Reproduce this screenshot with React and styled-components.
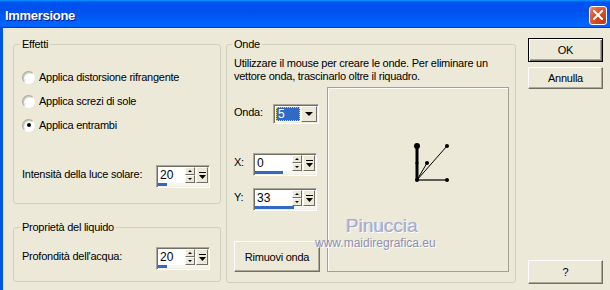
import React from 'react';
import styled, { createGlobalStyle } from 'styled-components';

const GlobalStyle = createGlobalStyle`
  * { box-sizing: border-box; }
  html, body { margin: 0; padding: 0; background: #ece9d8; }
  body {
    font-family: "Liberation Sans", Arial, sans-serif;
    font-size: 11px;
    letter-spacing: -0.25px;
    color: #000;
  }
`;

const Window = styled.div`
  width: 610px;
  height: 290px;
  overflow: hidden;
  display: flex;
  flex-direction: column;
`;

const TitleBar = styled.div`
  flex: none;
  height: 28px;
  display: flex;
  align-items: center;
  justify-content: space-between;
  padding: 2px 3px 0 5px;
  background: linear-gradient(180deg, #0997ff, #0053ee 8%, #0050ee 40%, #0066ff 88%, #0066ff 93%, #005bff 95%, #003dd7 96%, #003dd7);
`;

const Title = styled.span`
  color: #fff;
  font-weight: bold;
  font-size: 13px;
  letter-spacing: -0.3px;
  text-shadow: 1px 1px 0 #0a1883;
`;

const CloseButton = styled.div`
  width: 18px;
  height: 19px;
  border: 1px solid #fff;
  border-radius: 3px;
  display: flex;
  align-items: center;
  justify-content: center;
  background: radial-gradient(circle at 85% 85%, #c63a0c, #d8512a 55%, #e2704f 80%, #ec9a80);
`;

const Body = styled.div`
  flex: 1;
  display: flex;
  border-left: 3px solid #0055e5;
  padding: 10px 0 6px 10px;
`;

const LeftColumn = styled.div`
  width: 208px;
  margin-right: 5px;
  display: flex;
  flex-direction: column;
  gap: 17px;
`;

const GroupBox = styled.fieldset`
  margin: 0;
  min-width: 0;
  height: ${p => p.$height}px;
  width: ${p => p.$width || 208}px;
  padding: 0 ${p => p.$padRight}px 0 ${p => p.$padLeft}px;
  border: 1px solid #d0d0bf;
  border-radius: 3px;
`;

const Legend = styled.legend`
  padding: 0 2px;
  margin-left: -2px;
  line-height: 13px;
`;

const RadioList = styled.div`
  margin-top: 14px;
  display: flex;
  flex-direction: column;
`;

const RadioRow = styled.div`
  height: 24px;
  display: flex;
  align-items: center;
  gap: 4px;
`;

const RadioCircle = styled.span`
  width: 13px;
  height: 13px;
  border-radius: 50%;
  background: radial-gradient(circle at 65% 65%, #fff 40%, #e6e4dc);
  border: 1px solid;
  border-color: #aca899 #fff #fff #aca899;
  box-shadow: inset 1px 1px 0 #c9c6b8;
  display: flex;
  align-items: center;
  justify-content: center;

  &::after {
    content: '';
    display: ${p => (p.$checked ? 'block' : 'none')};
    width: 4px;
    height: 4px;
    border-radius: 50%;
    background: #000;
  }
`;

const FieldRow = styled.div`
  display: flex;
  justify-content: ${p => p.$justify || 'flex-start'};
  align-items: flex-start;
  margin-top: ${p => p.$top || 0};
  margin-bottom: ${p => p.$bottom || 0}px;
`;

const FieldLabel = styled.span`
  width: ${p => (p.$width ? `${p.$width}px` : 'auto')};
  line-height: 17px;
  margin-top: ${p => p.$offset ?? 1}px;
`;

const SpinFrame = styled.div`
  width: ${p => p.$width}px;
  display: flex;
  flex-direction: column;
  padding: 1px;
  border: 1px solid;
  border-color: #aca899 #fff #fff #aca899;
  box-shadow: inset 1px 1px 0 #716f64, inset -1px -1px 0 #f1efe2;
  background: #f7f6f1;
`;

const SpinTop = styled.div`
  height: 16px;
  display: flex;
`;

const SpinValue = styled.div`
  flex: 1;
  background: #fff;
  font-size: 12px;
  letter-spacing: 0;
  line-height: 16px;
  padding-left: 2px;
`;

const Arrows = styled.div`
  width: 10px;
  display: flex;
  flex-direction: column;
`;

const ArrowBtn = styled.div`
  flex: 1;
  background: #ece9d8;
  border: 1px solid;
  border-color: #fff #716f64 #716f64 #fff;
  display: flex;
  align-items: center;
  justify-content: center;

  &::after {
    content: '';
    border-left: 2px solid transparent;
    border-right: 2px solid transparent;
    ${p => (p.$up ? 'border-bottom: 2px solid #000;' : 'border-top: 2px solid #000;')}
  }
`;

const PopButton = styled.div`
  width: 12px;
  margin-left: 1px;
  background: #ece9d8;
  border: 1px solid;
  border-color: #fff #716f64 #716f64 #fff;
  display: flex;
  align-items: center;
  justify-content: center;
`;

const Track = styled.div`
  height: 3px;
  display: flex;
`;

const Fill = styled.div`
  width: ${p => p.$fill}px;
  background: #316ac5;
`;

const OndeBox = styled(GroupBox)`
  margin-right: 12px;
`;

const Description = styled.p`
  margin: 6px 0 0;
  line-height: 13px;
`;

const WaveRow = styled.div`
  position: relative;
  margin-top: 4px;
  height: 185px;
  display: flex;
  gap: 7px;
`;

const Controls = styled.div`
  width: 86px;
  display: flex;
  flex-direction: column;
`;

const ComboFrame = styled.div`
  width: 46px;
  height: 20px;
  display: flex;
  padding: 1px;
  border: 1px solid;
  border-color: #aca899 #fff #fff #aca899;
  box-shadow: inset 1px 1px 0 #716f64, inset -1px -1px 0 #f1efe2;
  background: #fff;
`;

const ComboValue = styled.div`
  flex: 1;
  margin: 1px;
  background: #316ac5;
  border: 1px dotted #e8d070;
  color: #fff;
  font-size: 12px;
  letter-spacing: 0;
  line-height: 12px;
  padding-left: 1px;
`;

const ComboArrow = styled.div`
  width: 16px;
  background: #ece9d8;
  border: 1px solid;
  border-color: #fff #716f64 #716f64 #fff;
  display: flex;
  align-items: center;
  justify-content: center;

  &::after {
    content: '';
    border-left: 4px solid transparent;
    border-right: 4px solid transparent;
    border-top: 4px solid #000;
  }
`;

const Canvas = styled.div`
  flex: 1;
  border: 1px solid #a3a194;
  box-shadow: inset 1px 1px 0 #fff;
  display: flex;
`;

const Watermark = styled.div`
  position: absolute;
  left: 81px;
  top: 129px;
  display: flex;
  flex-direction: column;
  pointer-events: none;
  letter-spacing: 0;
`;

const Signature = styled.span`
  margin-left: 31px;
  font-size: 19px;
  line-height: 20px;
  color: #a8accb;
  text-shadow: 1px 1px 0 #fff, -1px 0 0 #c8cadc;
`;

const Site = styled.span`
  font-size: 12px;
  line-height: 14px;
  color: #8c90b0;
  text-shadow: 1px 1px 0 #fff;
`;

const Button = styled.div`
  width: ${p => p.$width || 75}px;
  height: ${p => p.$height || 23}px;
  margin-top: ${p => p.$top || 0};
  display: flex;
  align-items: center;
  justify-content: center;
  background: #ece9d8;
  border: 1px solid;
  border-color: ${p => (p.$default ? '#000' : '#fff #716f64 #716f64 #fff')};
  box-shadow: ${p =>
    p.$default
      ? 'inset 1px 1px 0 #fff, inset -1px -1px 0 #716f64, inset -2px -2px 0 #aca899'
      : 'inset -1px -1px 0 #aca899'};
`;

const ButtonColumn = styled.div`
  width: 75px;
  display: flex;
  flex-direction: column;
`;

const Spin = ({ width, value, fill }) => (
  <SpinFrame $width={width}>
    <SpinTop>
      <SpinValue>{value}</SpinValue>
      <Arrows>
        <ArrowBtn $up />
        <ArrowBtn />
      </Arrows>
      <PopButton>
        <svg width="7" height="7" viewBox="0 0 7 7">
          <rect x="0" y="0" width="7" height="1" fill="#000" />
          <polygon points="0,3 7,3 3.5,7" fill="#000" />
        </svg>
      </PopButton>
    </SpinTop>
    <Track>
      <Fill $fill={fill} />
    </Track>
  </SpinFrame>
);

const WaveVectors = () => (
  <svg width="180" height="183" viewBox="0 0 180 183">
    <line x1="89" y1="58" x2="89" y2="92" stroke="#000" strokeWidth="3" />
    <line x1="89" y1="92" x2="119" y2="92" stroke="#000" strokeWidth="1.2" />
    <line x1="89" y1="92" x2="119" y2="58" stroke="#000" strokeWidth="1" />
    <line x1="89" y1="92" x2="99" y2="75" stroke="#000" strokeWidth="1" />
    <circle cx="89" cy="58" r="3" fill="#000" />
    <circle cx="89" cy="75" r="1.6" fill="#000" />
    <circle cx="89" cy="92" r="2" fill="#000" />
    <circle cx="119" cy="92" r="2" fill="#000" />
    <circle cx="119" cy="58" r="2" fill="#000" />
    <circle cx="99" cy="75" r="2" fill="#000" />
  </svg>
);

const effects = [
  { label: 'Applica distorsione rifrangente', checked: false },
  { label: 'Applica screzi di sole', checked: false },
  { label: 'Applica entrambi', checked: true },
];

export default function App() {
  return (
    <>
      <GlobalStyle />
      <Window>
        <TitleBar>
          <Title>Immersione</Title>
          <CloseButton>
            <svg width="10" height="10" viewBox="0 0 10 10">
              <path d="M1 1 L9 9 M9 1 L1 9" stroke="#fff" strokeWidth="2" strokeLinecap="square" />
            </svg>
          </CloseButton>
        </TitleBar>
        <Body>
          <LeftColumn>
            <GroupBox $height={166} $padLeft={8} $padRight={10}>
              <Legend>Effetti</Legend>
              <RadioList>
                {effects.map(e => (
                  <RadioRow key={e.label}>
                    <RadioCircle $checked={e.checked} />
                    <span>{e.label}</span>
                  </RadioRow>
                ))}
              </RadioList>
              <FieldRow $justify="space-between" $top="28px">
                <FieldLabel>Intensità della luce solare:</FieldLabel>
                <Spin width={54} value="20" fill={9} />
              </FieldRow>
            </GroupBox>
            <GroupBox $height={61} $padLeft={8} $padRight={10}>
              <Legend>Proprietà del liquido</Legend>
              <FieldRow $justify="space-between" $top="13px">
                <FieldLabel>Profondità dell'acqua:</FieldLabel>
                <Spin width={54} value="20" fill={9} />
              </FieldRow>
            </GroupBox>
          </LeftColumn>

          <OndeBox $height={245} $width={290} $padLeft={7} $padRight={7}>
            <Legend>Onde</Legend>
            <Description>
              Utilizzare il mouse per creare le onde. Per eliminare un vettore onda, trascinarlo oltre il riquadro.
            </Description>
            <WaveRow>
              <Controls>
                <FieldRow $top="17px">
                  <FieldLabel $width={39} $offset={0}>Onda:</FieldLabel>
                  <ComboFrame>
                    <ComboValue>5</ComboValue>
                    <ComboArrow />
                  </ComboFrame>
                </FieldRow>
                <FieldRow $top="29px">
                  <FieldLabel $width={19}>X:</FieldLabel>
                  <Spin width={64} value="0" fill={28} />
                </FieldRow>
                <FieldRow $top="12px">
                  <FieldLabel $width={19}>Y:</FieldLabel>
                  <Spin width={64} value="33" fill={39} />
                </FieldRow>
                <Button $width={86} $height={31} $top="auto">Rimuovi onda</Button>
              </Controls>
              <Canvas>
                <WaveVectors />
              </Canvas>
              <Watermark>
                <Signature>Pinuccia</Signature>
                <Site>www.maidiregrafica.eu</Site>
              </Watermark>
            </WaveRow>
          </OndeBox>

          <ButtonColumn>
            <Button $default $height={24}>OK</Button>
            <Button $top="5px" $height={22}>Annulla</Button>
            <Button $top="auto" $height={24}>?</Button>
          </ButtonColumn>
        </Body>
      </Window>
    </>
  );
}
